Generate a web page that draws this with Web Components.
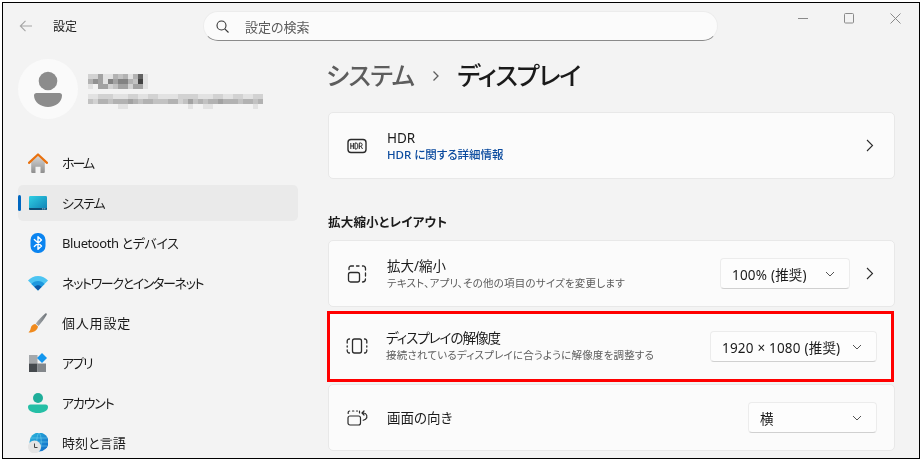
<!DOCTYPE html>
<html lang="ja">
<head>
<meta charset="utf-8">
<title>設定</title>
<style>
  html, body { margin: 0; height: 100%; background: #fff; overflow: hidden; }
  body {
    padding: 2px 0 1px 2px;
    box-sizing: border-box;
    font-family: "Noto Sans", "Noto Sans CJK JP", sans-serif;
    font-feature-settings: "palt";
    color: #1b1b1b;
  }
  svg { display: block; }
</style>
</head>
<body>
<settings-window>
  <win-titlebar slot="top" title-text="設定" placeholder="設定の検索"></win-titlebar>

  <nav-sidebar slot="side">
    <user-card></user-card>
    <nav-item label="ホーム" style="letter-spacing:-2px">
      <svg width="20" height="20" viewBox="0 0 20 20">
        <defs><linearGradient id="hb" x1="0" y1="0" x2="0" y2="1"><stop offset="0" stop-color="#d6d6d6"/><stop offset="1" stop-color="#8e8e8e"/></linearGradient></defs>
        <path d="M3.200 9.200 10 3l6.800 6.200V19a1 1 0 0 1-1 1h-3.300v-6.200h-5V20H4.200a1 1 0 0 1-1-1z" fill="url(#hb)"/>
        <path d="M1 9.800 10 1.500l9 8.300" fill="none" stroke="#e8710f" stroke-width="2.300" stroke-linecap="round" stroke-linejoin="round"/>
      </svg>
    </nav-item>
    <nav-item label="システム" selected style="letter-spacing:-1.200px">
      <svg width="20" height="20" viewBox="0 0 20 20">
        <defs><linearGradient id="sb" x1="0" y1="0" x2="1" y2="1"><stop offset="0" stop-color="#2fd0e4"/><stop offset="1" stop-color="#0f7fb4"/></linearGradient></defs>
        <rect x="1" y="3" width="18" height="14" rx="1.300" fill="url(#sb)"/>
        <path d="M1 15h18v.7a1.300 1.300 0 0 1-1.300 1.300H2.300A1.300 1.300 0 0 1 1 15.700z" fill="#0d4f78"/>
        <rect x="14.200" y="15.400" width="1.200" height="1" fill="#bfe6f2"/><rect x="16.200" y="15.400" width="1.200" height="1" fill="#bfe6f2"/>
      </svg>
    </nav-item>
    <nav-item label="Bluetooth とデバイス" style="letter-spacing:-.4px">
      <svg width="20" height="20" viewBox="0 0 20 20">
        <rect x="2.500" y="0" width="15" height="20" rx="7" fill="#0a84f0"/>
        <path d="M6.300 6.600 13.500 13 10 16.200V3.800L13.500 7 6.300 13.400" fill="none" stroke="#fff" stroke-width="1.400" stroke-linejoin="round" stroke-linecap="round"/>
      </svg>
    </nav-item>
    <nav-item label="ネットワークとインターネット" style="letter-spacing:-1.350px">
      <svg width="20" height="20" viewBox="0 0 20 20">
        <path d="M0 7.500C2.500 4.800 6 3 10 3s7.500 1.800 10 4.500L10 17.500z" fill="#4cc4f2"/>
        <path d="M3.400 10.900C5 9.200 7.300 8 10 8s5 1.200 6.600 2.900L10 17.500z" fill="#1e98de"/>
        <path d="M6.300 13.800C7.300 12.800 8.600 12.200 10 12.200s2.700.6 3.700 1.600L10 17.500z" fill="#0e5aa8"/>
      </svg>
    </nav-item>
    <nav-item label="個人用設定" style="letter-spacing:.8px">
      <svg width="20" height="20" viewBox="0 0 20 20">
        <defs><linearGradient id="br" x1="0" y1="0" x2="1" y2="0"><stop offset="0" stop-color="#a8acb0"/><stop offset="1" stop-color="#6d7378"/></linearGradient></defs>
        <path d="M17.300.4c.9-.5 1.800.4 1.400 1.300-2 3.600-5.200 8-8.200 11.200L7.800 10.400C10.500 6.800 14 3 17.300.4z" fill="url(#br)"/>
        <path d="M7.300 10.900l2.700 2.500c-.5 3.200-3.200 5.900-9 6.100-.4 0-.5-.4-.2-.6 2-1.300 1.400-3.500 2.600-5.700.8-1.300 2.200-2.100 3.900-2.300z" fill="#f08a1d"/>
      </svg>
    </nav-item>
    <nav-item label="アプリ" style="letter-spacing:-1.600px">
      <svg width="20" height="20" viewBox="0 0 20 20">
        <rect x="1" y="2" width="8.500" height="8.500" fill="#a5a8ab"/>
        <rect x="1" y="10.500" width="8.500" height="8.500" fill="#45494d"/>
        <rect x="9.500" y="10.500" width="8.500" height="8.500" fill="#83878b"/>
        <path d="M14 0l5 5-5 5-5-5z" fill="#1296ee"/>
      </svg>
    </nav-item>
    <nav-item label="アカウント" style="letter-spacing:-1.200px">
      <svg width="20" height="20" viewBox="0 0 20 20">
        <circle cx="10" cy="5" r="5" fill="#1fae9a"/>
        <path d="M0 14a2.500 2.500 0 0 1 2.500-2.500h15A2.500 2.500 0 0 1 20 14c0 3.500-4 6-10 6S0 17.500 0 14z" fill="#25bfa6"/>
      </svg>
    </nav-item>
    <nav-item label="時刻と言語" style="letter-spacing:.1px">
      <svg width="20" height="20" viewBox="0 0 20 20">
        <defs><linearGradient id="gl" x1="0" y1="0" x2="1" y2="1"><stop offset="0" stop-color="#2bb8dc"/><stop offset="1" stop-color="#1168c8"/></linearGradient></defs>
        <circle cx="11" cy="9" r="9.500" fill="url(#gl)"/>
        <path d="M11 0c-3 2.500-3 15 0 18.500M11 0c3 2.500 3 15 0 18.500M1.500 9h19M2.800 5h16.400M2.800 13h16.400" fill="none" stroke="#7fd4ee" stroke-width=".5"/>
        <circle cx="6.500" cy="14" r="6.500" fill="#e4e4e4"/>
        <path d="M6.500 10.500V14.500h3" fill="none" stroke="#444" stroke-width="1"/>
      </svg>
    </nav-item>
  </nav-sidebar>

  <settings-main slot="main">
    <page-title parent="システム" current="ディスプレイ"></page-title>

    <setting-card>
      <svg slot="icon" width="20" height="20" viewBox="0 0 20 20">
        <rect x="1" y="3.500" width="18" height="13" rx="3" fill="none" stroke="#2b2b2b" stroke-width="1.400"/>
        <path d="M3.800 7v6M6.400 7v6M3.800 10h2.600M8 7v6h.9c1.600 0 1.900-1.300 1.900-3s-.3-3-1.900-3zM12.300 13V7h1.500c1.800 0 1.800 3.300 0 3.300h-1.500M14 10.300l1.500 2.700" fill="none" stroke="#2b2b2b" stroke-width="1"/>
      </svg>
      <span slot="title">HDR</span>
      <span slot="sub" style="color:#0a4a9e;font-weight:500;font-size:11.500px;letter-spacing:0">HDR に関する詳細情報</span>
      <row-chevron slot="end"></row-chevron>
    </setting-card>

    <section-heading>拡大縮小とレイアウト</section-heading>

    <div style="display:flex;flex-direction:column;gap:2px">
      <setting-card>
        <svg slot="icon" width="20" height="20" viewBox="0 0 20 20" fill="none" stroke="#2b2b2b" stroke-width="1.300" stroke-linecap="round">
          <rect x="1.500" y="8.500" width="11" height="9.500" rx="2"/>
          <path d="M2 5.500V4a2 2 0 0 1 2-2h2.500M9.500 2H12M15.500 2a2.500 2.500 0 0 1 3 2.500V6M18.500 9v3M18.500 15a3 3 0 0 1-3 3"/>
        </svg>
        <span slot="title">拡大/縮小</span>
        <span slot="sub">テキスト、アプリ、その他の項目のサイズを変更します</span>
        <combo-box slot="end" value="100% (推奨)" width="130"></combo-box>
        <row-chevron slot="end"></row-chevron>
      </setting-card>

      <setting-card highlight>
        <svg slot="icon" width="22" height="20" viewBox="0 0 22 20" fill="none" stroke="#2b2b2b" stroke-width="1.300" stroke-linecap="round">
          <rect x="6.500" y="3" width="9" height="14" rx="2"/>
          <path d="M3.500 3A2 2 0 0 0 1.200 5v2M1.200 10v1M1.200 14a2.500 2.500 0 0 0 2.300 3M18.500 3a2 2 0 0 1 2.300 2v2M20.800 10v1M20.800 14a2.500 2.500 0 0 1-2.300 3"/>
        </svg>
        <span slot="title" style="letter-spacing:-1px">ディスプレイの解像度</span>
        <span slot="sub">接続されているディスプレイに合うように解像度を調整する</span>
        <combo-box slot="end" value="1920 × 1080 (推奨)" width="167"></combo-box>
      </setting-card>

      <setting-card>
        <svg slot="icon" width="24" height="20" viewBox="0 0 24 20" fill="none" stroke="#2b2b2b" stroke-width="1.200" stroke-linecap="round">
          <path d="M1.200 5.500V4.500A1.500 1.500 0 0 1 2.700 3M5.500 3H6.800M9.500 3h1M12.500 3.200V5"/>
          <rect x="1" y="8" width="12.500" height="9" rx="2"/>
          <path d="M15 5h1.500a3.500 3.500 0 0 1 2 6.300c-.6.400-1.300.7-2.300 1M17 3l-2 2 2 2"/>
        </svg>
        <span slot="title">画面の向き</span>
        <combo-box slot="end" value="横" width="129"></combo-box>
      </setting-card>
    </div>
  </settings-main>
</settings-window>

<script>
class SettingsWindow extends HTMLElement {
  constructor() {
    super();
    this.attachShadow({mode: 'open'});
    this.shadowRoot.innerHTML = `
      <style>
        :host {
          display: grid;
          grid-template-columns: 307px 1fr;
          grid-template-rows: 50px 1fr;
          height: 100%;
          box-sizing: border-box;
          border: 1px solid #000;
          background: #f3f3f3;
          overflow: hidden;
        }
        ::slotted([slot=top]) { grid-column: 1 / 3; }
      </style>
      <slot name="top"></slot>
      <slot name="side"></slot>
      <slot name="main"></slot>`;
  }
}

class WinTitlebar extends HTMLElement {
  constructor() {
    super();
    this.attachShadow({mode: 'open'});
  }
  connectedCallback() {
    this.shadowRoot.innerHTML = `
      <style>
        :host { display: flex; align-items: flex-start; height: 50px; position: relative; }
        .back { margin: 16px 0 0 15px; width: 16px; }
        .name { margin: 15px 0 0 19px; width: 150px; font-size: 12px; line-height: 18px; color: #1b1b1b; }
        .search {
          margin-top: 8px; width: 515px; height: 30px; box-sizing: border-box;
          display: flex; align-items: center; gap: 16px; padding-left: 12px;
          background: #fbfbfb; border: 1px solid #ececec; border-bottom: 1px solid #8a8a8a; border-radius: 15px;
          font-size: 13px; color: #5c5c5c;
        }
        .controls { margin: 10px 0 0 auto; display: flex; gap: 35px; padding-right: 18px; }
        svg { display: block; }
      </style>
      <div class="back"><svg width="16" height="14" viewBox="0 0 16 14" fill="none" stroke="#a6a6a6" stroke-width="1.100"><path d="M14 7H2.500M7.500 1.800 2.300 7l5.200 5.200"/></svg></div>
      <div class="name">${this.getAttribute('title-text')}</div>
      <div class="search">
        <svg width="13" height="13" viewBox="0 0 13 13" fill="none" stroke="#333" stroke-width="1.100"><circle cx="5.500" cy="5.500" r="4.500"/><path d="M8.800 8.800 12.500 12.500"/></svg>
        <span>${this.getAttribute('placeholder')}</span>
      </div>
      <div class="controls">
        <svg width="11" height="11" viewBox="0 0 11 11" stroke="#8a8a8a" fill="none"><path d="M0 5.500h10"/></svg>
        <svg width="11" height="11" viewBox="0 0 11 11" stroke="#8a8a8a" fill="none"><rect x=".5" y=".5" width="9" height="9.500" rx="1"/></svg>
        <svg width="11" height="11" viewBox="0 0 11 11" stroke="#8a8a8a" fill="none"><path d="M.5.500l10 10M10.500.500l-10 10"/></svg>
      </div>`;
  }
}

class NavSidebar extends HTMLElement {
  constructor() {
    super();
    this.attachShadow({mode: 'open'});
    this.shadowRoot.innerHTML = `
      <style>
        :host { display: flex; flex-direction: column; gap: 4px; padding: 6px 12px 0 15px; overflow: hidden; min-height: 0; }
        ::slotted(user-card) { margin-bottom: 22px; }
      </style>
      <slot></slot>`;
  }
}

class UserCard extends HTMLElement {
  constructor() {
    super();
    this.attachShadow({mode: 'open'});
    this.shadowRoot.innerHTML = `
      <style>
        :host { display: flex; align-items: center; gap: 10px; height: 60px; flex: none; }
        .avatar { width: 60px; height: 60px; border-radius: 50%; background: #fafafa; display: flex; align-items: center; justify-content: center; }
        .info { display: flex; flex-direction: column; gap: 5px; margin-top: 5px; }
        svg { display: block; }
      </style>
      <div class="avatar">
        <svg width="30" height="36" viewBox="0 0 30 36"><circle cx="15" cy="10" r="9.300" fill="#8c8c8c"/><path d="M1 24.500c0-1.200 1-2.500 2.500-2.500h23c1.500 0 2.500 1.300 2.500 2.500C29 31 22.500 36 15 36S1 31 1 24.500z" fill="#8c8c8c"/></svg>
      </div>
      <div class="info">
        <blur-mosaic cell="5" rows="ddaeebcbeb6e|b9ae8a88bc4e|efaadcaadaae"></blur-mosaic>
        <blur-mosaic cell="5" rows="eedddeeeddeeddeeeeddddeeeddeeddeedd|cdbbcbbbabcbbcccbbdcacbcbbabbbcbbcb|ffffffeeffffffffffffeffeeffffffffef"></blur-mosaic>
      </div>`;
  }
}

// pixelated name and mail, one hex grey digit per cell
class BlurMosaic extends HTMLElement {
  constructor() {
    super();
    this.attachShadow({mode: 'open'});
  }
  connectedCallback() {
    const cell = +this.getAttribute('cell');
    const rows = this.getAttribute('rows').split('|');
    const cols = Math.max(...rows.map(r => r.length));
    let rects = '';
    rows.forEach((row, y) => {
      [...row].forEach((c, x) => {
        const v = parseInt(c, 16) * 17;
        rects += `<rect x="${x * cell}" y="${y * cell}" width="${cell}" height="${cell}" fill="rgb(${v},${v},${v})"/>`;
      });
    });
    this.shadowRoot.innerHTML = `
      <style>:host { display: block; line-height: 0; mix-blend-mode: multiply; }</style>
      <svg width="${cols * cell}" height="${rows.length * cell}" shape-rendering="crispEdges">${rects}</svg>`;
  }
}

class NavItem extends HTMLElement {
  constructor() {
    super();
    this.attachShadow({mode: 'open'});
  }
  connectedCallback() {
    this.shadowRoot.innerHTML = `
      <style>
        :host { display: flex; align-items: center; gap: 14px; height: 36px; flex: none; padding-left: 10px; border-radius: 5px; position: relative; font-size: 13px; color: #1b1b1b; }
        :host([selected]) { background: #eaeaea; }
        :host([selected])::before { content: ""; position: absolute; left: 0; top: 10px; width: 3px; height: 16px; border-radius: 2px; background: #0067c0; }
        span { margin-top: -2px; }
      </style>
      <slot></slot><span>${this.getAttribute('label')}</span>`;
  }
}

class SettingsMain extends HTMLElement {
  constructor() {
    super();
    this.attachShadow({mode: 'open'});
    this.shadowRoot.innerHTML = `
      <style>:host { display: block; padding: 0 24px 0 18px; overflow: hidden; min-height: 0; }</style>
      <slot></slot>`;
  }
}

class PageTitle extends HTMLElement {
  constructor() {
    super();
    this.attachShadow({mode: 'open'});
  }
  connectedCallback() {
    this.shadowRoot.innerHTML = `
      <style>
        :host { display: flex; align-items: center; height: 44px; margin: 0 0 15px -2px; font-size: 25px; line-height: 44px; font-weight: 500; color: #1a1a1a; white-space: nowrap; }
        .parent { color: #5d5d5d; letter-spacing: -.7px; }
        .current { letter-spacing: -1.300px; }
        svg { margin: 2px 17px 0 18px; }
      </style>
      <span class="parent">${this.getAttribute('parent')}</span>
      <svg width="8" height="12" viewBox="0 0 8 12" fill="none" stroke="#5d5d5d" stroke-width="1.300"><path d="M1.500 1.500 6 6l-4.500 4.500"/></svg>
      <span class="current">${this.getAttribute('current')}</span>`;
  }
}

class SectionHeading extends HTMLElement {
  constructor() {
    super();
    this.attachShadow({mode: 'open'});
    this.shadowRoot.innerHTML = `
      <style>:host { display: block; margin: 35px 0 8px; font-size: 12.500px; letter-spacing: .2px; line-height: 18px; font-weight: 700; color: #1b1b1b; }</style>
      <slot></slot>`;
  }
}

class SettingCard extends HTMLElement {
  constructor() {
    super();
    this.attachShadow({mode: 'open'});
    this.shadowRoot.innerHTML = `
      <style>
        :host {
          display: flex; align-items: center; height: 67px; box-sizing: border-box; padding: 0 17px 0 18px;
          background: #fbfbfb; border: 1px solid #e8e8e8; border-radius: 5px;
        }
        :host([highlight]) {
          height: 71px; margin: 2px 1px 0 -1px; padding-left: 16px; padding-right: 14px; padding-bottom: 2px;
          border: 3px solid #f00; border-radius: 0;
        }
        .icon { width: 40px; flex: none; }
        .text { flex: 1; display: flex; flex-direction: column; min-width: 0; }
        .title { font-size: 13.500px; line-height: 18px; color: #1b1b1b; }
        .sub { font-size: 10.500px; letter-spacing: .2px; line-height: 16px; color: #5d5d5d; }
        .end { display: flex; align-items: center; gap: 14px; }
        :host([highlight]) .end { margin-top: 2px; }
      </style>
      <div class="icon"><slot name="icon"></slot></div>
      <div class="text">
        <div class="title"><slot name="title"></slot></div>
        <div class="sub"><slot name="sub"></slot></div>
      </div>
      <div class="end"><slot name="end"></slot></div>`;
  }
}

class RowChevron extends HTMLElement {
  constructor() {
    super();
    this.attachShadow({mode: 'open'});
    this.shadowRoot.innerHTML = `
      <style>:host { display: block; width: 12px; margin-right: 1px; } svg { display: block; margin: auto; }</style>
      <svg width="8" height="13" viewBox="0 0 8 13" fill="none" stroke="#2b2b2b" stroke-width="1.100"><path d="M1 1l5.500 5.500L1 12"/></svg>`;
  }
}

class ComboBox extends HTMLElement {
  constructor() {
    super();
    this.attachShadow({mode: 'open'});
  }
  connectedCallback() {
    this.shadowRoot.innerHTML = `
      <style>
        :host {
          display: flex; align-items: center; justify-content: space-between;
          width: ${this.getAttribute('width')}px; height: 31px; box-sizing: border-box; padding: 0 14px 0 11px;
          background: #fdfdfd; border: 1px solid #ececec; border-bottom-color: #d0d0d0; border-radius: 4px;
          font-size: 13.500px; letter-spacing: .2px; color: #1b1b1b;
        }
      </style>
      <span>${this.getAttribute('value')}</span>
      <svg width="10" height="6" viewBox="0 0 10 6" fill="none" stroke="#555" stroke-width="1"><path d="M1 1l4 4 4-4"/></svg>`;
  }
}

customElements.define('settings-window', SettingsWindow);
customElements.define('win-titlebar', WinTitlebar);
customElements.define('nav-sidebar', NavSidebar);
customElements.define('user-card', UserCard);
customElements.define('blur-mosaic', BlurMosaic);
customElements.define('nav-item', NavItem);
customElements.define('settings-main', SettingsMain);
customElements.define('page-title', PageTitle);
customElements.define('section-heading', SectionHeading);
customElements.define('setting-card', SettingCard);
customElements.define('row-chevron', RowChevron);
customElements.define('combo-box', ComboBox);
</script>
</body>
</html>
